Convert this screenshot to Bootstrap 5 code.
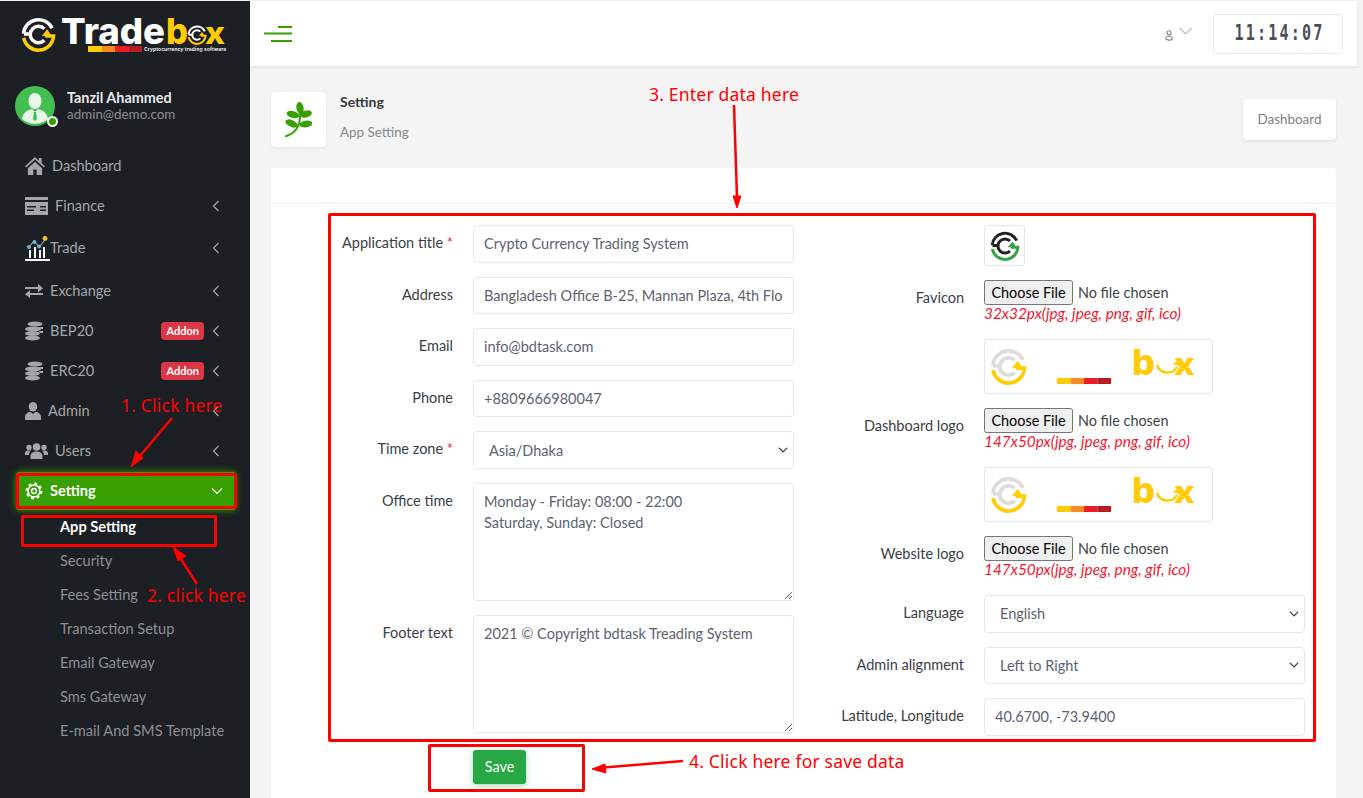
<!DOCTYPE html>
<html lang="en"><head><meta charset="utf-8"><title>App Setting</title>
<link href="https://cdn.jsdelivr.net/npm/bootstrap@5.3.0/dist/css/bootstrap.min.css" rel="stylesheet">
<style>
html,body{height:100%;overflow:hidden}
body{background:#e6e6e6;font-family:"Lato","Noto Sans",sans-serif;font-size:14.5px;color:#343a40}
.stage{position:relative;width:1363px;height:798px;padding-top:1px;overflow:hidden;background:#f4f4f4}
.shell{display:flex;height:797px}
.side{width:250px;flex:none;background:#1c1f23}
.brand{height:65px}
.brand svg{display:block}
.who{display:flex;align-items:center;gap:12px;padding:0 15px;height:80px}
.ava{position:relative;width:40px;height:40px;flex:none}
.ava svg{display:block}
.dot{position:absolute;right:-3px;bottom:-1px;width:11px;height:11px;border-radius:50%;background:#37a000;border:2px solid #fff}
.who b{display:block;font-weight:700;font-size:14.4px;color:#e9e9e9;line-height:17px}
.who span{display:block;font-size:13.4px;color:#8d9194;line-height:17px}
.menu{list-style:none;margin:0;padding:0}
.menu>li{height:40px}
.menu .itm{display:flex;align-items:center;gap:7px;height:100%;padding:0 30px 0 25px;color:#a4a7aa;text-decoration:none;font-size:14.6px}
.menu .tr{margin:2px 0 3px}
.menu .tr .itm{gap:0}
.menu .itm svg.ico{flex:none;fill:#a4a7aa}
.chev{margin-left:auto;flex:none}
.addon{margin-left:auto;background:#dc3545;color:#fff;font-size:11px;font-weight:700;line-height:18px;padding:0 5px;border-radius:4px;margin-right:1px}
.addon+.chev{margin-left:0}
.menu .on{padding:1px 0}
.menu .on .itm{background:#37a000;color:#fff;font-weight:700;margin:0 14px 0 16px;padding:0 13px 0 9px;border-radius:3px;box-shadow:0 0 7px #37a000;height:38px}
.menu .on svg.ico{fill:#fff}
.sub{list-style:none;margin:-1px 0 0;padding:0}
.sub a{display:flex;align-items:center;height:34px;padding-left:60px;color:#8d9194;text-decoration:none;font-size:14.6px}
.sub a.cur{color:#fff;font-weight:700}
.main{flex:1;min-width:0;display:flex;flex-direction:column}
.top{height:65px;margin-right:6px;background:#fff;box-shadow:0 1px 4px rgba(0,0,0,.08);display:flex;align-items:center;padding:0 14px}
.tog{display:block}
.usr{margin-left:auto;display:flex;align-items:center;gap:6px;margin-right:21px;margin-top:3px}
.usr svg+svg{margin-bottom:9px}
.clock{width:130px;height:40px;padding-left:3px;border:1px solid #e8e9ee;border-radius:4px;font-family:"DejaVu Sans Mono",monospace;font-weight:700;color:#4a4e5a;display:flex;align-items:center;justify-content:center}
.clock span{display:inline-block;font-size:21px;letter-spacing:3px;transform:scaleX(.72)}
.phead{display:flex;align-items:flex-start;padding:26px 27px 0 21px;height:102px;flex:none}
.leaf{width:55px;height:55px;background:#fff;border-radius:4px;box-shadow:0 1px 3px rgba(0,0,0,.08);display:flex;align-items:center;justify-content:center;flex:none}
.ttl{margin-left:14px}
.ttl h1{font-size:14px;font-weight:700;margin:0;line-height:19px;color:#343a40}
.ttl p{margin:12px 0 0;font-size:13.4px;color:#85888c;line-height:19px}
.dash{margin-left:auto;margin-top:7px;width:93px;height:41px;background:#fff;border:0;border-radius:4px;box-shadow:0 1px 3px rgba(0,0,0,.1);color:#7d8084;font-size:13.4px;padding:0}
.panel{margin:0 27px 0 21px;flex:1;background:#fff;border:0;border-radius:4px 4px 0 0}
.panel .card-header{height:36px;background:#fff;border-bottom:1px solid #eceef0;border-radius:4px 4px 0 0;padding:0}
.formgrid{display:grid;grid-template-columns:511px 511px;padding:21px 0 0 12px}
.fld{display:flex;gap:20px;margin-bottom:14px}
.fld>label{width:170px;flex:none;text-align:right;padding-top:7px;line-height:21px;margin:0;color:#3a4048}
.fld>.ctl{width:321px;flex:none}
.spacer{width:170px;flex:none}
.req{color:#dc3545}
.form-control,.form-select{height:37.6px;padding:7px 10px;font-size:14.5px;color:#5c6370;border:1px solid #e3e6ea;border-radius:4px;line-height:21px;font-family:inherit}
.form-select{padding-left:15px;background-position:right 4px center;background-size:12px 10px}
textarea.form-control{height:118px}
.pic{display:block;background:#fff;border:1px solid #e3e6ea;border-radius:3px}
.ficon{width:41px;height:41px;display:flex;align-items:center;justify-content:center}
.plogo{width:229px;height:55px}
.fileline{display:block;font-family:inherit;font-size:14.4px;height:25px;color:#3d4348}
.fileline::file-selector-button{font-family:inherit;font-size:14.4px;height:25px;width:89px;padding:0;margin-right:5px}
.hint{display:block;font-style:italic;color:#f4162f;font-size:15.4px;line-height:17px}
.upl{margin-bottom:17px}
.savebar{padding:0 0 0 202px}
.savebtn{width:53px;height:34px;padding:0;background:#28a745;border:0;color:#fff;font-size:14.4px;border-radius:3px;box-shadow:0 2px 6px rgba(40,167,69,.4)}
.note{position:absolute;color:#f00;font-family:"Noto Sans",sans-serif;font-size:17.5px;line-height:24px;white-space:nowrap;letter-spacing:.2px}
.box{position:absolute;border:3px solid #f00;border-radius:2px}
.arrows{position:absolute;left:0;top:0;pointer-events:none}
</style></head>
<body>
<svg width="0" height="0" style="position:absolute">
<defs>
<symbol id="ring" viewBox="0 0 36 36">
<path d="M2.600 17A15.500 15.500 0 0 1 32 11.500" fill="none" style="stroke:var(--ra)" stroke-width="3.600"/>
<path d="M24 12A8.500 8.500 0 1 0 24 24" fill="none" style="stroke:var(--ra)" stroke-width="3.600"/>
<path d="M3 17.500H11" fill="none" style="stroke:var(--ra)" stroke-width="3.600"/>
<path d="M2.800 21.500A15.500 15.500 0 0 0 33.500 19.500H25" fill="none" style="stroke:var(--rb)" stroke-width="3.600"/>
<path d="M27 12.500l-5.500 7h10z" style="fill:var(--rb)"/>
</symbol>
<symbol id="wlogo" viewBox="0 0 229 55">
<use href="#ring" x="5" y="8" width="37" height="37" style="--ra:#dcdcdc;--rb:#ffcc05"/>
<rect x="72" y="38" width="13.500" height="6" fill="#ffcc05"/><rect x="85.500" y="38" width="13.500" height="6" fill="#f68b1f"/><rect x="99" y="38" width="13.500" height="6" fill="#ed1c24"/><rect x="112.500" y="38" width="13.500" height="6" fill="#b71c24"/>
<text x="147" y="35" font-family="Inter,sans-serif" font-weight="800" font-size="36" fill="#ffcc05" textLength="23" lengthAdjust="spacingAndGlyphs">b</text>
<path d="M172 25a11 11 0 0 0 20 2" fill="none" stroke="#ffcc05" stroke-width="2.500"/><path d="M188 24l7-5 1 8z" fill="#ffcc05"/>
<text x="189" y="35" font-family="Inter,sans-serif" font-weight="800" font-size="31" fill="#ffcc05" textLength="21" lengthAdjust="spacingAndGlyphs">x</text>
</symbol>
<symbol id="cv-l" viewBox="0 0 8 12"><path d="M6.500 1 1.500 6l5 5" fill="none" stroke="#a4a7aa" stroke-width="1.200"/></symbol>
<symbol id="coin" viewBox="0 0 18 20"><ellipse cx="10" cy="3" rx="7.500" ry="2.600"/><ellipse cx="8" cy="8" rx="8" ry="2.600"/><ellipse cx="7.500" cy="12.500" rx="7.500" ry="2.600"/><ellipse cx="7.500" cy="17" rx="7.500" ry="2.600"/><path d="M14 6h4v2h-3zM14 10h4v2h-3z"/></symbol>
</defs></svg>
<div class="stage">
<div class="shell">
<aside class="side">
<div class="brand">
<svg width="250" height="65" viewBox="0 0 250 65">
<use href="#ring" x="21" y="16" width="35" height="35" style="--ra:#fff;--rb:#ffcc05"/>
<text x="61" y="43" font-family="Inter,sans-serif" font-weight="800" font-size="36" fill="#fff" textLength="104" lengthAdjust="spacingAndGlyphs">Trade</text>
<text x="166" y="43" font-family="Inter,sans-serif" font-weight="800" font-size="36" fill="#ffcc05" textLength="22" lengthAdjust="spacingAndGlyphs">b</text>
<use href="#ring" x="187" y="24" width="20" height="20" style="--ra:#fff;--rb:#ffcc05"/>
<text x="205" y="43" font-family="Inter,sans-serif" font-weight="800" font-size="30" fill="#ffcc05" textLength="20" lengthAdjust="spacingAndGlyphs">x</text>
<rect x="88" y="45" width="14" height="6" fill="#ffcc05"/><rect x="102" y="45" width="13" height="6" fill="#f68b1f"/><rect x="115" y="45" width="14" height="6" fill="#ed1c24"/><rect x="129" y="45" width="13" height="6" fill="#b71c24"/>
<text x="144" y="50" font-family="Inter,sans-serif" font-weight="700" font-size="4.800" fill="#eee" textLength="82">Cryptocurrency trading software</text>
</svg>
</div>
<div class="who">
<div class="ava"><svg width="40" height="40" viewBox="0 0 40 40"><circle cx="20" cy="20" r="20" fill="#43bf52"/><ellipse cx="20" cy="15" rx="6.500" ry="8" fill="#e8f6ea"/><path d="M7 33c1-7 6-9 10-10l3 3 3-3c4 1 9 3 10 10a20 20 0 0 1-26 0z" fill="#e8f6ea"/><path d="M19 26h2l1 7-2 2-2-2z" fill="#43bf52"/></svg><span class="dot"></span></div>
<div><b>Tanzil Ahammed</b><span>admin@demo.com</span></div>
</div>
<ul class="menu">
<li><a class="itm" href="#"><svg class="ico" width="20" height="18" viewBox="0 0 24 20" preserveAspectRatio="none"><path d="M12 0 0 10.300l1.300 1.500L12 2.700l10.700 9.100 1.300-1.500-4-3.400V1h-3.500v3.300zM3.500 12.500V20H10v-6h4v6h6.500v-7.500L12 5.300z"/></svg>Dashboard</a></li>
<li><a class="itm" href="#"><svg class="ico" width="23" height="18" viewBox="0 0 23 18"><path fill-rule="evenodd" d="M0 0h23v3H0zM0 5h23v13H0zM2 9v1.500h9V9zM2 12.500V14h7v-1.500zM15 9v1.500h6V9zM15 12.500V14h6v-1.500z"/></svg>Finance<svg class="chev" width="8" height="12"><use href="#cv-l"/></svg></a></li>
<li class="tr"><a class="itm" href="#"><svg width="25" height="25" viewBox="0 0 25 25"><path d="M0 23h25v2H0zM4 14h2v8H4zM9 11h2v11H9zM14 14h2v8h-2zM18 11h2v11h-2z" fill="#fff"/><path d="M4 11 9 5l5 6 6-7" fill="none" stroke="#b8c4cc"/><circle cx="4" cy="11" r="2" fill="#6cb6dd"/><circle cx="9.500" cy="6" r="2" fill="#6cb6dd"/><circle cx="14" cy="10.500" r="2" fill="#6cb6dd"/><circle cx="20" cy="2.500" r="2.400" fill="#f7c51c"/></svg>Trade<svg class="chev" width="8" height="12"><use href="#cv-l"/></svg></a></li>
<li><a class="itm" href="#"><svg class="ico" width="18" height="14" viewBox="0 0 18 14"><path d="M0 3h13V0l5 4.200-5 4.200V5H0zM18 9H5V6l-5 4.300 5 3.700v-3h13z"/></svg>Exchange<svg class="chev" width="8" height="12"><use href="#cv-l"/></svg></a></li>
<li><a class="itm" href="#"><svg class="ico" width="18" height="20"><use href="#coin"/></svg>BEP20<span class="addon">Addon</span><svg class="chev" width="8" height="12"><use href="#cv-l"/></svg></a></li>
<li><a class="itm" href="#"><svg class="ico" width="18" height="20"><use href="#coin"/></svg>ERC20<span class="addon">Addon</span><svg class="chev" width="8" height="12"><use href="#cv-l"/></svg></a></li>
<li><a class="itm" href="#"><svg class="ico" width="16" height="18" viewBox="0 0 16 18"><ellipse cx="8" cy="4.800" rx="4.300" ry="4.800"/><path d="M0 18v-3c0-3 3-5 5.500-5L8 12l2.500-2c2.500 0 5.500 2 5.500 5v3z"/></svg>Admin<svg class="chev" width="8" height="12"><use href="#cv-l"/></svg></a></li>
<li><a class="itm" href="#"><svg class="ico" width="23" height="16" viewBox="0 0 23 16"><circle cx="11.500" cy="4" r="3.800"/><circle cx="4" cy="4.500" r="2.700"/><circle cx="19" cy="4.500" r="2.700"/><path d="M5.500 16v-3c0-3 2.500-4.500 6-4.500s6 1.500 6 4.500v3zM0 12V10c0-1.500 1.500-2.500 3-2.500h3c-1.200 1-2 2.500-2 4.500zM23 12V10c0-1.500-1.500-2.500-3-2.500h-3c1.200 1 2 2.500 2 4.500z"/></svg>Users<svg class="chev" width="8" height="12"><use href="#cv-l"/></svg></a></li>
<li class="on"><a class="itm" href="#"><svg width="18" height="18" viewBox="0 0 24 24" fill="none" stroke="#fff"><circle cx="12" cy="12" r="9.500" stroke-width="3.500" stroke-dasharray="3.700 3.760"/><circle cx="12" cy="12" r="8" stroke-width="2"/><circle cx="12" cy="12" r="3.200" stroke-width="2"/></svg>Setting<svg class="chev" width="12" height="8" viewBox="0 0 12 8"><path d="M1 1.500 6 6.500l5-5" fill="none" stroke="#fff" stroke-width="1.200"/></svg></a></li>
</ul>
<ul class="sub">
<li><a class="cur" href="#">App Setting</a></li>
<li><a href="#">Security</a></li>
<li><a href="#">Fees Setting</a></li>
<li><a href="#">Transaction Setup</a></li>
<li><a href="#">Email Gateway</a></li>
<li><a href="#">Sms Gateway</a></li>
<li><a href="#">E-mail And SMS Template</a></li>
</ul>
</aside>
<main class="main">
<header class="top">
<svg class="tog" width="28" height="16" viewBox="0 0 28 16"><path d="M14 1h14M0 7.500h28M7 15h21" stroke="#37a000" stroke-width="2"/></svg>
<div class="usr"><svg width="8" height="11" viewBox="0 0 9 12" fill="none" stroke="#85888c" stroke-width="1.300"><circle cx="4.500" cy="3" r="2.300"/><ellipse cx="4.500" cy="9" rx="3.600" ry="2.200"/></svg><svg width="13" height="8" viewBox="0 0 13 8"><path d="M.5 1 6.500 7l6-6" fill="none" stroke="#85888c"/></svg></div>
<div class="clock"><span>11:14:07</span></div>
</header>
<div class="phead">
<div class="leaf"><svg width="27" height="35" viewBox="0 0 27 35" fill="#37a000"><ellipse cx="15" cy="6" rx="3.600" ry="6" transform="rotate(-10 15 6)"/><ellipse cx="8" cy="12.500" rx="6.500" ry="3.400" transform="rotate(15 8 12.500)"/><ellipse cx="21" cy="12" rx="6" ry="3.400" transform="rotate(-15 21 12)"/><ellipse cx="6.500" cy="21.500" rx="6.500" ry="3.400" transform="rotate(25 6.500 21.500)"/><ellipse cx="21" cy="22" rx="6.500" ry="3.400" transform="rotate(-8 21 22)"/><path d="M15 9C16 20 13 31 0 34.500" fill="none" stroke="#37a000" stroke-width="2"/></svg></div>
<div class="ttl"><h1>Setting</h1><p>App Setting</p></div>
<button class="dash" type="button">Dashboard</button>
</div>
<section class="card panel">
<div class="card-header"></div>
<form class="card-body p-0">
<div class="formgrid">
<div>
<div class="fld"><label>Application title <span class="req">*</span></label><div class="ctl"><input class="form-control" value="Crypto Currency Trading System"></div></div>
<div class="fld"><label>Address</label><div class="ctl"><input class="form-control" value="Bangladesh Office B-25, Mannan Plaza, 4th Floor, Khilkhet, Dhaka-1229"></div></div>
<div class="fld"><label>Email</label><div class="ctl"><input class="form-control" value="info@bdtask.com"></div></div>
<div class="fld"><label>Phone</label><div class="ctl"><input class="form-control" value="+8809666980047"></div></div>
<div class="fld"><label>Time zone <span class="req">*</span></label><div class="ctl"><select class="form-select"><option>Asia/Dhaka</option></select></div></div>
<div class="fld"><label>Office time</label><div class="ctl"><textarea class="form-control">Monday - Friday: 08:00 - 22:00
Saturday, Sunday: Closed</textarea></div></div>
<div class="fld"><label>Footer text</label><div class="ctl"><textarea class="form-control">2021 © Copyright bdtask Treading System</textarea></div></div>
</div>
<div>
<div class="fld"><span class="spacer"></span><div class="ctl"><div class="pic ficon"><svg width="30" height="30"><use href="#ring" width="30" height="30" style="--ra:#222;--rb:#35a24a"/></svg></div></div></div>
<div class="fld upl"><label>Favicon</label><div class="ctl"><input type="file" class="fileline"><small class="hint">32x32px(jpg, jpeg, png, gif, ico)</small></div></div>
<div class="fld"><span class="spacer"></span><div class="ctl"><svg class="pic plogo"><use href="#wlogo" width="229" height="55"/></svg></div></div>
<div class="fld upl"><label>Dashboard logo</label><div class="ctl"><input type="file" class="fileline"><small class="hint">147x50px(jpg, jpeg, png, gif, ico)</small></div></div>
<div class="fld"><span class="spacer"></span><div class="ctl"><svg class="pic plogo"><use href="#wlogo" width="229" height="55"/></svg></div></div>
<div class="fld upl"><label>Website logo</label><div class="ctl"><input type="file" class="fileline"><small class="hint">147x50px(jpg, jpeg, png, gif, ico)</small></div></div>
<div class="fld"><label>Language</label><div class="ctl"><select class="form-select"><option>English</option></select></div></div>
<div class="fld"><label>Admin alignment</label><div class="ctl"><select class="form-select"><option>Left to Right</option></select></div></div>
<div class="fld"><label>Latitude, Longitude</label><div class="ctl"><input class="form-control" value="40.6700, -73.9400"></div></div>
</div>
</div>
<div class="savebar"><button type="button" class="btn savebtn">Save</button></div>
</form>
</section>
</main>
</div>
<div class="box" style="left:16px;top:473px;width:221px;height:36px"></div>
<div class="box" style="left:21px;top:515px;width:196px;height:32px"></div>
<div class="box" style="left:328px;top:213px;width:988px;height:529px"></div>
<div class="box" style="left:428px;top:744px;width:157px;height:48px"></div>
<svg class="arrows" width="1363" height="798" viewBox="0 0 1363 798" fill="#f00" stroke="#f00">
<path d="M172 418 140 456" stroke-width="2.500"/><path d="M131 467l5-16 7 7z"/>
<path d="M197 584 179 556" stroke-width="2.500"/><path d="M173 547l13 9-8 5z"/>
<path d="M734 105 737 198" stroke-width="2.500"/><path d="M737 208l-4-12h8z"/>
<path d="M683 761 604 767.500" stroke-width="2.500"/><path d="M592 769l13-5 1 9z"/>
</svg>
<span class="note" style="left:121px;top:393px">1. Click here</span>
<span class="note" style="left:147px;top:583px">2. click here</span>
<span class="note" style="left:649px;top:82px">3. Enter data here</span>
<span class="note" style="left:689px;top:749px">4. Click here for save data</span>
</div>
<script src="https://cdn.jsdelivr.net/npm/bootstrap@5.3.0/dist/js/bootstrap.bundle.min.js"></script>
</body></html>
